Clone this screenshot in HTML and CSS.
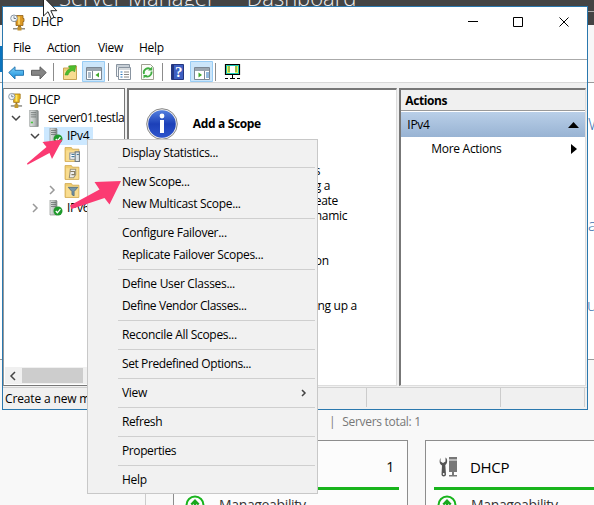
FILE: index.html
```html
<!DOCTYPE html>
<html lang="en">
<head>
<meta charset="utf-8">
<title>DHCP</title>
<link rel="stylesheet" href="styles.css">
</head>
<body>
<svg class="defs" width="0" height="0">
  <defs>
    <linearGradient id="blue" x1="0" y1="0" x2="0" y2="1"><stop offset="0" stop-color="#7fd0f8"/><stop offset="1" stop-color="#168fdc"/></linearGradient>
    <linearGradient id="info" x1="0" y1="0" x2="0" y2="1"><stop offset="0" stop-color="#5480df"/><stop offset=".5" stop-color="#1c40b8"/><stop offset="1" stop-color="#2d54cc"/></linearGradient>
    <linearGradient id="tower" x1="0" y1="0" x2="1" y2="0"><stop offset="0" stop-color="#e4e7e6"/><stop offset=".6" stop-color="#b7bdbb"/><stop offset="1" stop-color="#7f8684"/></linearGradient>
    <symbol id="server" viewBox="0 0 16 16">
      <path d="M4 0h7l1 1v14.500H4z" fill="url(#tower)" stroke="#7c8381" stroke-width=".6"/>
      <path d="M5 2.500h5M5 4.500h5M5 6.500h5" stroke="#6b7270" stroke-width=".8"/>
      <rect x="5" y="11" width="2" height="1.500" fill="#45c33c"/>
    </symbol>
    <symbol id="server-ok" viewBox="0 0 16 16">
      <path d="M2 0h6l1 1v14H2z" fill="url(#tower)" stroke="#7c8381" stroke-width=".6"/>
      <path d="M3 2.500h5M3 4.500h5M3 6.500h5" stroke="#6b7270" stroke-width=".8"/>
      <circle cx="10" cy="11" r="4.500" fill="#1f9a2c"/>
      <path d="M7.800 11l1.600 1.800 3-3.600" fill="none" stroke="#fff" stroke-width="1.300"/>
    </symbol>
    <symbol id="folder" viewBox="0 0 16 16">
      <path d="M1 1.500h6l1 1.500h6v11.500H1z" fill="#f1cf72" stroke="#d0a850" stroke-width=".8"/>
      <path d="M2 4h11.500v10H2z" fill="#f9dd91"/>
    </symbol>
    <symbol id="dhcp" viewBox="0 0 16 16">
      <path d="M5 1h8v5l-1 1v3H6V7L5 6z" fill="#e9b520" stroke="#9b7215" stroke-width=".8"/>
      <path d="M8 2h2v7H8z" fill="#ffe960"/>
      <path d="M8 10h2v3H8z" fill="#9a762c"/>
      <path d="M3 13h12v1.600H3z" fill="#8c8c86"/><path d="M7 12h4v4H7z" fill="#c39a30"/>
      <circle cx="4" cy="3.800" r="3.300" fill="#f3f7fb" stroke="#8a97a5"/>
      <path d="M4 1.800v2.200h2" fill="none" stroke="#566575" stroke-width=".8"/>
    </symbol>
    <symbol id="dhcp-title" viewBox="0 0 16 16">
      <path d="M6 1h7v3h1v3h-1v4H6V7H5V4h1z" fill="#dd9a26" stroke="#8f5f16" stroke-width=".8"/>
      <path d="M8 2h2v8H8z" fill="#f6cf62"/>
      <path d="M8 11h3v2H8z" fill="#9a762c"/>
      <path d="M3 13.500h12v1.500H3z" fill="#8c8c86"/><path d="M7.500 12.500h4v3.500h-4z" fill="#c3902c"/>
      <circle cx="4" cy="3.800" r="3.300" fill="#f3f7fb" stroke="#8a97a5"/>
      <path d="M4 1.800v2.200h2" fill="none" stroke="#566575" stroke-width=".8"/>
    </symbol>
    <symbol id="check-up" viewBox="0 0 20 20">
      <circle cx="10" cy="10" r="8.500" fill="none" stroke="#18b41c" stroke-width="2"/>
      <path d="M10 15V6M6.300 9.500L10 5.800l3.700 3.700" fill="none" stroke="#18a81c" stroke-width="2.400"/>
    </symbol>
    <symbol id="role" viewBox="0 0 18 20">
      <path d="M10 0h8v2.500h-8zM10 3.500h8V15h-8zM13 15h2v3h3v1.500h-8V18h3z" fill="#777"/>
      <path d="M1.500 1v3.500L4 6l2.500-1.500V.5C8.500 1.500 9 6 6.300 8L7 17.500c0 2.500-4.500 2.500-4.500 0L3 8.500C0 7 .3 3 1.500 1z" fill="#555"/>
      <circle cx="4.700" cy="17" r=".9" fill="#fff"/>
    </symbol>
  </defs>
</svg>

<div class="desktop">
  <header class="sm-header"><span class="sm-title">Server Manager <b>·</b> Dashboard</span></header>
  <div class="sm-bar"></div>
  <div class="sm-welcome"></div>
  <div class="sm-roles">
    <div class="sm-summary"><i>|</i><span>Servers total: 1</span></div>
    <div class="tiles">
      <section class="tile tile-a">
        <div class="tile-head"><strong class="count">1</strong></div>
        <div class="tile-bar"></div>
        <div class="tile-row"><svg width="20" height="20"><use href="#check-up"/></svg><span>Manageability</span></div>
      </section>
      <section class="tile tile-b">
        <div class="tile-head"><svg width="18" height="20"><use href="#role"/></svg><span class="tile-name">DHCP</span></div>
        <div class="tile-bar"></div>
        <div class="tile-row"><svg width="20" height="20"><use href="#check-up"/></svg><span>Manageability</span></div>
      </section>
    </div>
  </div>
  <div class="right-line"></div>
  <div class="left-tab"></div>
  <span class="bg-text bg-w">W</span>
  <span class="bg-text bg-a">a</span>
  <span class="bg-text bg-u">u</span>
</div>

<main class="window">
  <div class="titlebar">
    <svg width="16" height="17"><use href="#dhcp-title"/></svg>
    <span class="title">DHCP</span>
    <svg class="controls" width="106" height="12" viewBox="0 0 106 12" fill="none" stroke="#000">
      <path d="M0 5.500h10M45.500 1.500h9v9h-9zM91.500 1.500l9 9M100.500 1.500l-9 9"/>
    </svg>
  </div>
  <nav class="menubar"><span class="m-file">File</span><span class="m-action">Action</span><span class="m-view">View</span><span>Help</span></nav>
  <div class="toolbar">
    <svg width="216" height="22" viewBox="0 0 216 22">
      <path d="M.8 11.500L7 5.800v3.500h8.500v5H7V18z" fill="url(#blue)" stroke="#2878b2"/>
      <path d="M38.200 11.500L32 5.800v3.500h-8.500v5H32V18z" fill="#858585" stroke="#606060"/>
      <path d="M45.500 2v18M100.500 2v18M154.500 2v18M207.500 2v18" stroke="#8c8c8c"/>
      <path d="M55.500 7h5l1-2h7v13.500h-13z" fill="#efce79" stroke="#c9a455"/>
      <path d="M56 10h12v8H56z" fill="#f8dc91"/>
      <path d="M57 14c1-4 3-6 5-6.500L60.500 5l7.500-.5-1.500 6.500-1.500-1.500c-3 .5-4 2-5 4.500z" fill="#4fbc2c" stroke="#2f9a24" stroke-width=".5"/>
      <path d="M74.500.5h22v20h-22z" fill="#cce6fa" stroke="#99cdf5"/>
      <path d="M78.500 6.500h15v12h-15z" fill="#fff" stroke="#7b8793"/><path d="M79 7h14v3H79z" fill="#9ba6b0"/><path d="M80 12h3M80 14h3M80 16h3" stroke="#5a7894"/><path d="M84.500 10v8" stroke="#7b8793"/><path d="M91 11.500v5l-3.500-2.500z" fill="#42aa2c"/>
      <g transform="translate(-5)"><path d="M113.500 3.500h13v12h-13z" fill="#f4f6f8" stroke="#8994a0"/><path d="M114 5h12" stroke="#9aa8b5"/><path d="M115.500 6.500h12v12h-12z" fill="#fff" stroke="#8994a0"/><path d="M116 8h11" stroke="#aab4bd"/><path d="M117.500 11h2M117.500 13.500h2M117.500 16h2" stroke="#2675bd"/><path d="M121 11h5M121 13.500h5M121 16h5" stroke="#888"/></g>
      <g transform="translate(-4)"><path d="M137.500 3.500h9l3 3v12h-12z" fill="#fcfcf8" stroke="#a0a092"/><path d="M147 8.500a4.300 4.300 0 0 0-7 4.500M140.500 14.500a4.300 4.300 0 0 0 7-4" fill="none" stroke="#40ad40" stroke-width="1.800"/><path d="M144 9.500h4.300V5.500zM143.500 14h-4v3.500z" fill="#40ad40"/></g>
      <g transform="translate(-4)"><path d="M167.500 3.500h12v15h-12z" fill="#3e5fc2" stroke="#25367e"/><path d="M168 4h2v14h-2z" fill="#22357f"/>
      <text x="171" y="16" class="help-glyph">?</text></g>
      <g transform="translate(-4)"><path d="M186.500.5h22v20h-22z" fill="#cce6fa" stroke="#99cdf5"/>
      <path d="M190.500 6.500h15v12h-15z" fill="#fff" stroke="#7b8793"/><path d="M191 7h14v3h-14z" fill="#9ba6b0"/><path d="M200.500 10v8" stroke="#7b8793"/><path d="M202 12h3M202 14h3M202 16h3" stroke="#2675bd"/><path d="M194.500 11.500v5l3.500-2.500z" fill="#42aa2c"/></g>
    </svg>
    <svg class="monitor" width="17" height="17" viewBox="0 0 17 17"><path d="M1.500 1.500h14v10h-14z" fill="#e8f45c" stroke="#000" stroke-width="1.200"/><path d="M2.500 2.500h12v8h-12z" fill="none" stroke="#19c8b7"/><path d="M6 3h5v7H6z" fill="#fff"/><path d="M4 4h2M4 6h2M4 8h2M11 4h2M11 6h2M11 8h2" stroke="#276e31" stroke-width=".8"/><path d="M8.500 12v3M1 15.500h3M6 15.500h5M13 15.500h3" stroke="#000"/></svg>
  </div>
  <div class="panes">
    <section class="pane tree">
      <div class="node n0"><svg width="15" height="17"><use href="#dhcp"/></svg><span>DHCP</span></div>
      <div class="node n1"><svg class="chev" width="10" height="8"><path d="M1 2l4 4 4-4"/></svg><svg width="18" height="17"><use href="#server"/></svg><span>server01.testla</span></div>
      <div class="node n2 selected"><svg class="chev" width="10" height="8"><path d="M1 2l4 4 4-4"/></svg><svg width="16" height="16"><use href="#server-ok"/></svg><span>IPv4</span></div>
      <div class="node n3"><svg width="17" height="17" viewBox="0 0 16 16"><use href="#folder"/><path d="M5.500 6.500h6v6h-6z" fill="#fff" stroke="#8a9299"/><path d="M10.500 5.500h4v9h-4z" fill="#dce4e8" stroke="#727b80"/><path d="M7 8h3M7 10h3M12 8h2" stroke="#477b9d"/></svg></div>
      <div class="node n3"><svg width="17" height="17" viewBox="0 0 16 16"><use href="#folder"/><path d="M6 5h5v5l-2 3H5z" fill="#eee" stroke="#9b9278"/><path d="M6 7h4v3H7" fill="none" stroke="#877c61"/></svg></div>
      <div class="node n3"><svg class="chev light" width="8" height="10"><path d="M2 1l4 4-4 4"/></svg><svg width="17" height="17" viewBox="0 0 16 16"><use href="#folder"/><path d="M4 5h9l-3.500 4v4l-2-1V9z" fill="#7595aa" stroke="#476477" stroke-width=".7"/></svg></div>
      <div class="node n2"><svg class="chev light" width="10" height="10"><path d="M3 1l4 4-4 4"/></svg><svg width="16" height="16"><use href="#server-ok"/></svg><span>IPv6</span></div>
      <div class="scroll"><svg class="chev" width="8" height="10"><path d="M6 1L2 5l4 4"/></svg><div class="thumb"></div></div>
    </section>
    <section class="pane detail">
      <div class="detail-head">
        <svg width="34" height="34" viewBox="0 0 34 34"><circle cx="17" cy="17" r="15.300" fill="#eee" stroke="#888"/><circle cx="17" cy="17" r="13.800" fill="url(#info)"/><circle cx="17" cy="9" r="2.400" fill="#fff"/><path d="M15 13h4v13h-4z" fill="#fff"/></svg>
        <h1>Add a Scope</h1>
      </div>
      <div class="lines"><p>s</p><p>g a</p><p>eate</p><p>namic</p><p></p><p></p><p>on</p><p></p><p></p><p>ing up a</p></div>
    </section>
    <aside class="pane actions">
      <h2>Actions</h2>
      <div class="group"><span>IPv4</span><svg width="11" height="6"><path d="M0 6L5.500 0 11 6z"/></svg></div>
      <div class="more"><span>More Actions</span><svg width="6" height="10"><path d="M0 0l6 5-6 5z"/></svg></div>
    </aside>
  </div>
  <footer class="status"><span class="s-text">Create a new m</span><span class="s-a"></span><span class="s-b"></span></footer>
</main>

<div class="context">
  <ul><li>Display Statistics...</li></ul>
  <ul><li>New Scope...</li><li>New Multicast Scope...</li></ul>
  <ul><li>Configure Failover...</li><li>Replicate Failover Scopes...</li></ul>
  <ul><li>Define User Classes...</li><li class="tight">Define Vendor Classes...</li></ul>
  <ul><li>Reconcile All Scopes...</li></ul>
  <ul><li class="tight">Set Predefined Options...</li></ul>
  <ul><li>View<svg class="chev" width="6" height="8"><path d="M1 1l3 3-3 3"/></svg></li></ul>
  <ul><li class="tight">Refresh</li></ul>
  <ul><li class="tight">Properties</li></ul>
  <ul><li>Help</li></ul>
</div>

<svg class="overlay" width="594" height="505" viewBox="0 0 594 505">
  <g fill="#fb3a72">
    <path d="M27 163.500L46.500 147 42.500 142 62.500 139.500 52 159 49.500 153 27.500 164.800z"/>
    <path d="M70 205.500L99.500 189.500 94.500 182 121 181 109.500 204.500 104.500 198 71.500 209z"/>
  </g>
  <path d="M43.500-3v19l4.500-4.300 3.200 7 2.800-1.300-3.200-6.700h6z" fill="#fff" stroke="#222"/>
</svg>
</body>
</html>
```

FILE: styles.css
```css
* { box-sizing: border-box; }
body {
  margin: 0;
  width: 594px;
  height: 505px;
  overflow: hidden;
  position: relative;
  font: 12px/16px "Open Sans", "Noto Sans", sans-serif;
  letter-spacing: -0.3px;
  color: #000;
}
svg { display: block; flex: none; }
span { white-space: nowrap; }
.defs { position: absolute; }
h1, h2, p, ul { margin: 0; padding: 0; }
ul { list-style: none; }

/* Server Manager behind the console */
.desktop { display: flex; flex-direction: column; height: 505px; overflow: hidden; }
.sm-header { height: 25px; background: #444; color: #eee; overflow: hidden; flex: none; }
.sm-title { display: block; margin: -18px 0 0 59px; font-size: 22px; font-weight: 300; line-height: 30px; letter-spacing: 0; }
.sm-title b { margin: 0 7px; font-weight: 400; }
.sm-bar { height: 57px; background: #f7f7f7; flex: none; }
.sm-welcome { height: 278px; background: #fff; border: solid #999; border-width: 1px 0; flex: none; }
.sm-roles { flex: 1; background: #f8f8f8; }
.sm-summary { display: flex; gap: 7px; margin: 54px 0 0 329px; color: #777; font-size: 12px; line-height: 16px; letter-spacing: -0.3px; }
.sm-summary i { font-style: normal; }
.tiles { display: flex; gap: 17px; margin: 10px 0 0 145px; height: 80px; border-left: 1px solid #ccc; padding-left: 27px; }
.tile { flex: none; border: 1px solid #8d8d8d; border-bottom: 0; background: #fcfcfc; padding: 0 8px; }
.tile-a { width: 235px; }
.tile-b { width: 190px; }
.tile-head { height: 46px; display: flex; align-items: center; padding: 6px 5px 0; font-size: 15px; }
.tile-name { margin-left: 13px; }
.count { margin-left: auto; font-weight: 400; font-size: 14px; }
.tile-bar { height: 3px; background: #18b41c; }
.tile-row { display: flex; gap: 14px; padding: 5px 3px; font-size: 14px; line-height: 20px; letter-spacing: -0.35px; color: #333; }
.right-line { position: absolute; left: 588px; top: 11px; width: 6px; height: 1px; background: #aaa; }
.left-tab { position: absolute; left: 0; top: 46px; width: 2px; height: 26px; background: #0b73bd; }
.bg-text { position: absolute; color: #3b73ad; font-size: 17px; font-weight: 300; line-height: 20px; }
.bg-w { left: 588px; top: 114px; }
.bg-a { left: 588px; top: 215px; }
.bg-u { left: 587px; top: 295px; }

/* console window */
.window {
  position: absolute;
  left: 2px;
  top: 6px;
  width: 586px;
  height: 404px;
  display: flex;
  flex-direction: column;
  background: #f0f0f0;
  border: 1px solid #2a78ae;
}
.titlebar { height: 30px; display: flex; align-items: center; padding: 0 13px 0 7px; background: #fff; }
.title { margin-left: 6px; }
.controls { margin-left: auto; }
.menubar { height: 23px; display: flex; padding: 3px 10px; background: #fff; border-bottom: 1px solid #aaa; }
.m-file { width: 34px; }
.m-action { width: 51px; }
.m-view { width: 41px; }
.toolbar { height: 23px; display: flex; padding: 1px 0 0 5px; background: #fff; border-bottom: 1px solid #d8d8d8; }
.monitor { margin-top: 2px; }
.help-glyph { font: bold 15px "Liberation Serif", serif; fill: #fff; }
.panes { display: flex; height: 304px; padding: 5px 1px 1px 0; flex: none; }
.pane { background: #fff; border: 1px solid #777; overflow: hidden; }
.tree { width: 122px; display: flex; flex-direction: column; border-left-color: #999; }
.detail { width: 271px; margin-left: 2px; border-width: 2px 1px 1px 2px; border-right-color: #ddd; border-bottom-color: #ddd; }
.actions { width: 187px; margin-left: 2px; border-width: 2px 1px 1px 2px; border-right-color: #ddd; border-bottom-color: #ddd; }

.chev path { fill: none; stroke: #444; stroke-width: 1.500; }
.chev.light path { stroke: #999; }
.node { display: flex; align-items: center; height: 18px; flex: none; }
.node:first-child { margin-top: 2px; }
.n0 { padding-left: 4px; }
.n0 span { margin-left: 6px; }
.n1 { padding-left: 7px; }
.n1 > svg + svg { margin-left: 4px; }
.n1 span { margin-left: 5px; letter-spacing: -0.42px; }
.n2 { padding-left: 26px; }
.n2 > svg + svg { margin-left: 8px; }
.n2 span { margin-left: 2px; padding: 0 3px 0 1px; }
.selected { background: linear-gradient(#cce8ff, #cce8ff) 40px 0 / 49px 18px no-repeat; }
.n3 { padding-left: 60px; }
.n3 .light { margin: 0 8px 0 -16px; }
.scroll { display: flex; align-items: center; height: 17px; margin: auto 0 1px 1px; padding-left: 4px; background: #f0f0f0; }
.thumb { margin-left: 5px; width: 61px; height: 15px; background: #cdcdcd; }

.detail-head { display: flex; align-items: center; height: 68px; padding-left: 16px; }
h1 { margin-left: 14px; font-size: 12px; letter-spacing: -0.35px; }
.lines { padding: 5px 0 0 186px; }
.lines p { height: 15px; line-height: 15px; white-space: nowrap; }
h2 { height: 21px; padding-left: 4px; font-size: 12px; line-height: 22px; letter-spacing: -0.4px; background: #f0f0f0; border-bottom: 1px solid #999; }
.group { display: flex; align-items: center; justify-content: space-between; height: 25px; margin-top: 1px; padding: 0 6px; background: linear-gradient(#b9cfe8, #98b3d3); }
.more { display: flex; align-items: center; justify-content: space-between; height: 24px; padding: 0 8px 0 30px; }
.status { display: flex; height: 21px; padding: 0 2px 1px; border-top: 1px solid #d0d0d0; }
.s-text { width: 362px; padding-top: 3px; letter-spacing: -0.15px; border-right: 1px solid #ccc; }
.s-a { width: 134px; border-right: 1px solid #ccc; }
.s-b { flex: 1; border-right: 1px solid #ccc; }

/* context menu */
.context {
  position: absolute;
  left: 87px;
  top: 139px;
  width: 231px;
  height: 355px;
  padding: 2px;
  background: #f1f1f1;
  border: 1px solid #c8c8c8;
}
.context ul { margin-left: 28px; }
.context ul + ul { margin-top: 3px; padding-top: 3px; border-top: 1px solid #cfcfcf; }
.context li { display: flex; align-items: center; justify-content: space-between; height: 22px; padding: 0 8px 0 4px; }
.tight { letter-spacing: -0.4px; }
.overlay { position: absolute; left: 0; top: 0; pointer-events: none; }
```
